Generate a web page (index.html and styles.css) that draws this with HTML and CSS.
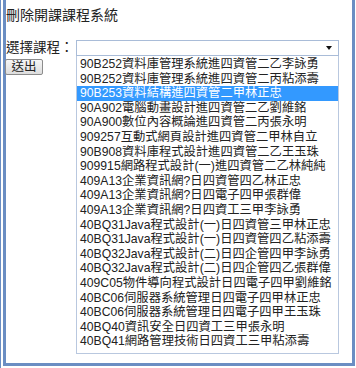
FILE: index.html
```html
<!DOCTYPE html>
<html lang="zh-Hant">
<head>
    <meta charset="UTF-8">
    <title>刪除開課課程系統</title>
    <link rel="stylesheet" href="styles.css">
</head>
<body>
    <div class="frame">
        <h1 class="title">刪除開課課程系統</h1>
        <div class="form">
            <label class="label">選擇課程：</label>
            <div class="select"><span class="arrow"></span></div>
            <div class="side">
                <button class="btn">送出</button>
            </div>
            <ul class="list">
                <li><span class="code">90B252</span>資料庫管理系統進四資管二乙李詠勇</li>
                <li><span class="code">90B252</span>資料庫管理系統進四資管二丙粘添壽</li>
                <li class="active"><span class="code">90B253</span>資料結構進四資管二甲林正忠</li>
                <li><span class="code">90A902</span>電腦動畫設計進四資管二乙劉維銘</li>
                <li><span class="code">90A900</span>數位內容概論進四資管二丙張永明</li>
                <li><span class="code">909257</span>互動式網頁設計進四資管二甲林自立</li>
                <li><span class="code">90B908</span>資料庫程式設計進四資管二乙王玉珠</li>
                <li><span class="code">909915</span>網路程式設計(一)進四資管二乙林純純</li>
                <li><span class="code">409A13</span>企業資訊網?日四資管四乙林正忠</li>
                <li><span class="code">409A13</span>企業資訊網?日四電子四甲張群偉</li>
                <li><span class="code">409A13</span>企業資訊網?日四資工三甲李詠勇</li>
                <li><span class="code">40BQ31Java</span>程式設計(一)日四資管三甲林正忠</li>
                <li><span class="code">40BQ31Java</span>程式設計(一)日四資管四乙粘添壽</li>
                <li><span class="code">40BQ32Java</span>程式設計(二)日四企管四甲李詠勇</li>
                <li><span class="code">40BQ32Java</span>程式設計(二)日四企管四乙張群偉</li>
                <li><span class="code">409C05</span>物件導向程式設計日四電子四甲劉維銘</li>
                <li><span class="code">40BC06</span>伺服器系統管理日四電子四甲林正忠</li>
                <li><span class="code">40BC06</span>伺服器系統管理日四電子四甲王玉珠</li>
                <li><span class="code">40BQ40</span>資訊安全日四資工三甲張永明</li>
                <li><span class="code">40BQ41</span>網路管理技術日四資工三甲粘添壽</li>
            </ul>
        </div>
    </div>
</body>
</html>
```

FILE: styles.css
```css
html, body {
    margin: 0;
    background: #fff;
}
body {
    width: 356px;
    height: 368px;
    box-sizing: border-box;
    border-left: 1px solid #6b8ec3;
    padding-left: 2px;
    font-family: "Liberation Sans", "Noto Sans CJK TC", sans-serif;
    color: #222;
}
.frame {
    width: 352px;
    height: 366px;
    box-sizing: border-box;
    border-left: 3px solid #6b8ec3;
    border-right: 3px solid #6b8ec3;
    border-bottom: 3px solid #6b8ec3;
    padding-top: 6px;
}
.title {
    margin: 0;
    font-size: 14px;
    font-weight: normal;
    line-height: 19px;
    color: #222;
}
.form {
    display: grid;
    grid-template-columns: 70px 263px;
    margin-top: 15px;
}
.label {
    font-size: 13.5px;
    line-height: 16px;
    color: #222;
}
.select {
    height: 16px;
    box-sizing: border-box;
    border: 1px solid #a9bcd8;
    display: flex;
    justify-content: flex-end;
    align-items: center;
    padding-right: 6px;
}
.arrow {
    width: 0;
    height: 0;
    border-left: 3px solid transparent;
    border-right: 3px solid transparent;
    border-top: 4px solid #111;
}
.side {
    padding-top: 1px;
    margin-left: -1px;
}
.btn {
    width: 38px;
    height: 16px;
    padding: 0;
    border: 1px solid #8c8c8c;
    border-radius: 2px;
    background: linear-gradient(#f6f6f6, #dddddd);
    font-family: "Liberation Sans", "Noto Sans CJK TC", sans-serif;
    font-size: 12.5px;
    line-height: 14px;
    color: #222;
}
.list {
    list-style: none;
    margin: 0;
    padding: 1px 0 4px;
    border: 1px solid #b9c8df;
    border-top: none;
}
.list li {
    height: 14.6px;
    line-height: 14.6px;
    padding-left: 3px;
    font-size: 12.3px;
    white-space: nowrap;
    overflow: hidden;
    color: #222;
}
.list .code {
    font-size: 12.2px;
}
.list .active {
    background: #3399ff;
    color: #fff;
}
```
